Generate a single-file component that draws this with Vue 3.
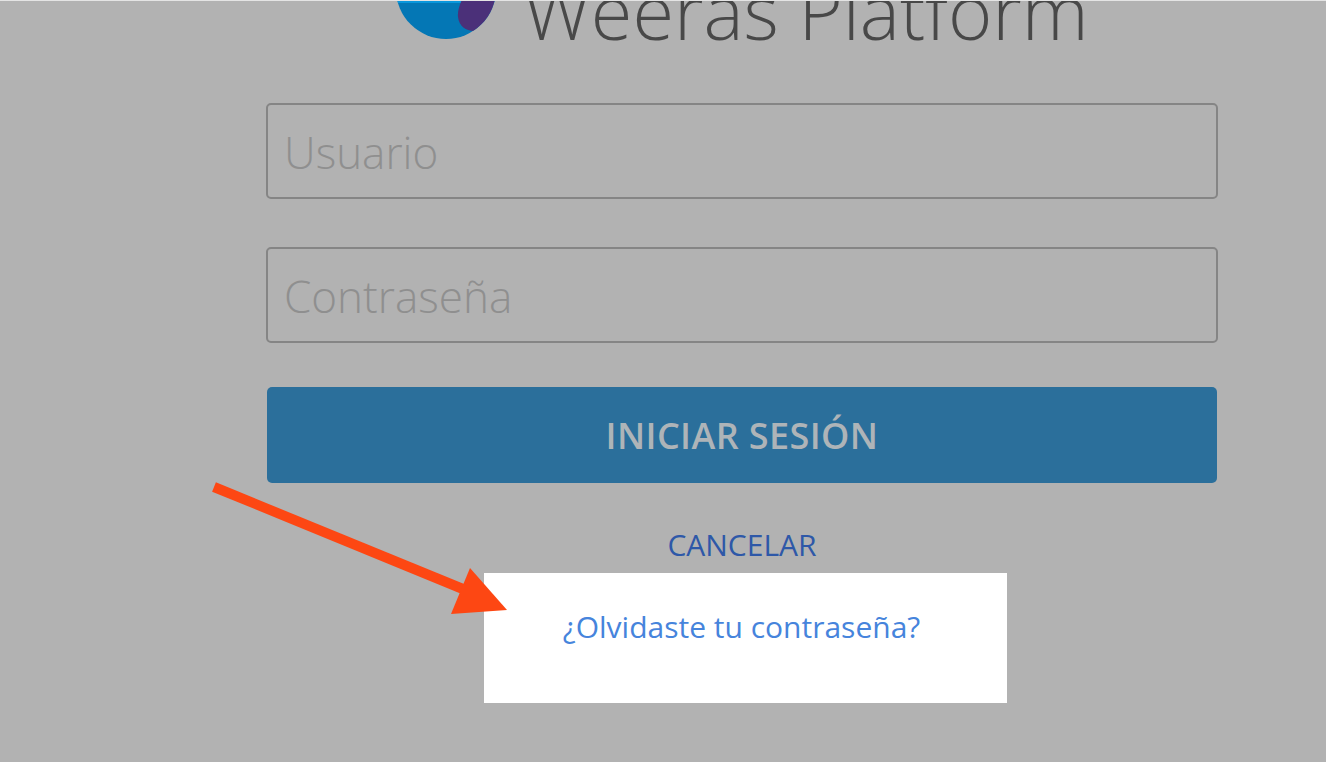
<template>
  <div class="page">
    <div class="top-line"></div>
    <div class="brand">
      <svg class="logo" viewBox="0 0 100 100" width="100" height="100">
        <defs>
          <clipPath id="logo-clip"><circle cx="50" cy="50" r="50" /></clipPath>
        </defs>
        <g clip-path="url(#logo-clip)">
          <rect width="100" height="100" fill="#0477b5" />
          <rect width="100" height="64" fill="#0a97dc" />
          <path d="M72 48 C66 60 61 70 62 78 C63 87 70 92 78 92 L104 80 L104 40 Z" fill="#4b3079" />
        </g>
      </svg>
      <h1 class="brand-name">Weeras Platform</h1>
    </div>

    <form class="login-form" @submit.prevent>
      <input class="field" type="text" placeholder="Usuario" />
      <input class="field" type="password" placeholder="Contraseña" />
      <button class="submit" type="submit">INICIAR SESIÓN</button>
      <a class="cancel" href="#">CANCELAR</a>
    </form>

    <div class="forgot-box">
      <a class="forgot" href="#">¿Olvidaste tu contraseña?</a>
    </div>

    <!-- flecha de anotacion sobre la captura -->
    <svg class="arrow" viewBox="0 0 1326 762" width="1326" height="762">
      <line x1="214" y1="487" x2="480" y2="596" stroke="#fd4713" stroke-width="10" />
      <polygon points="470,568 507,610 451,614" fill="#fd4713" />
    </svg>
  </div>
</template>

<script setup>
</script>

<style>
html, body {
  margin: 0;
  background: #b2b2b2;
}
</style>

<style scoped>
.page {
  position: relative;
  width: 1326px;
  height: 762px;
  overflow: hidden;
  background: #b2b2b2;
  font-family: "Open Sans", "Liberation Sans", sans-serif;
  display: flex;
  flex-direction: column;
  align-items: center;
}

.top-line {
  position: absolute;
  top: 0;
  left: 0;
  right: 0;
  height: 1px;
  background: #e4e4e4;
}

.brand {
  display: flex;
  align-items: center;
  gap: 27px;
  height: 100px;
  margin-top: -61px;
  margin-left: 159px;
}

.logo {
  display: block;
  flex-shrink: 0;
}

.brand-name {
  margin: 44px 0 0;
  font-size: 75.7px;
  line-height: 100px;
  font-weight: 300;
  color: #484848;
  white-space: nowrap;
}

.login-form {
  width: 952px;
  margin-top: 64px;
  margin-left: 158px;
  display: flex;
  flex-direction: column;
  align-items: center;
}

.field {
  width: 100%;
  height: 96px;
  box-sizing: border-box;
  margin-bottom: 48px;
  padding: 2px 16px 0;
  background: transparent;
  border: 2px solid #858585;
  border-radius: 5px;
  font-family: inherit;
  font-size: 44px;
  font-weight: 300;
  outline: none;
}

.field::placeholder {
  color: #8f8f8f;
  opacity: 1;
}

.field:nth-child(2) {
  margin-bottom: 44px;
}

.submit {
  width: 950px;
  height: 96px;
  border: none;
  border-radius: 5px;
  background: #2b6f9b;
  color: #aeb4b8;
  font-family: inherit;
  font-size: 36px;
  font-weight: 600;
  letter-spacing: 0.4px;
}

.cancel {
  margin-top: 42px;
  font-size: 30px;
  line-height: 40px;
  color: #2e58a8;
  text-decoration: none;
}

.forgot-box {
  width: 523px;
  height: 130px;
  box-sizing: border-box;
  margin-top: 8px;
  margin-left: 165px;
  padding: 32px 8px 0 0;
  background: #fff;
  text-align: center;
}

.forgot {
  font-size: 30px;
  line-height: 44px;
  color: #4684dc;
  text-decoration: none;
}

.arrow {
  position: absolute;
  top: 0;
  left: 0;
  pointer-events: none;
}
</style>
